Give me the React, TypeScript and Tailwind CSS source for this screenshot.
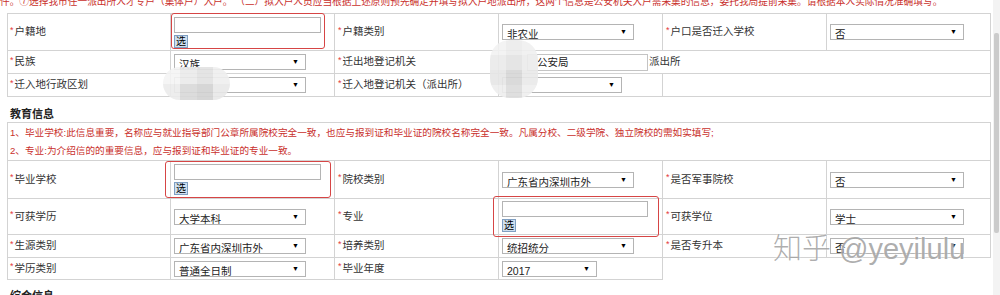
import React from 'react';

const font = "font-[family-name:'Liberation_Sans','Noto_Sans_CJK_SC',sans-serif]";

function Label({ text, first }: { text: string; first?: boolean }) {
  return (
    <div
      className={`${first ? 'border-l pl-[2px]' : 'pl-[3px]'} w-[164px] shrink-0 border-r border-b border-[#d3d3d3] flex items-center text-[10.5px] text-[#333]`}
    >
      <span className="text-[#e4393c] text-[9px] mr-[1px] -mt-[3px]">*</span>
      <span>{text}</span>
    </div>
  );
}

function Cell({ children, w = 'w-[164px]', className = '' }: { children?: React.ReactNode; w?: string; className?: string }) {
  return (
    <div className={`${w} shrink-0 border-r border-b border-[#d3d3d3] flex items-center pl-[3px] relative ${className}`}>
      {children}
    </div>
  );
}

function Select({ value, w }: { value: string; w: string }) {
  return (
    <div className={`${w} h-[16px] border border-[#b4b4b4] bg-white flex justify-between pl-[4px] pr-[6px] overflow-hidden`}>
      <span className="text-[10.5px] leading-[14px] pt-[2px] text-[#222]">{value}</span>
      <span className="text-[7px] leading-[14px] text-black">▼</span>
    </div>
  );
}

function PickField({ inputW }: { inputW: string }) {
  return (
    <div className="flex flex-col gap-[2px]">
      <div className={`${inputW} h-[16px] border border-[#b4b4b4] bg-white`} />
      <div className="w-[14px] h-[13px] border border-[#7f9fc2] bg-[#cfe0f0] text-[10px] leading-[11px] text-center text-black">
        选
      </div>
    </div>
  );
}

function Mosaic({ cols, colors, cell }: { cols: string; colors: string[]; cell: string }) {
  return (
    <div className={`grid ${cols}`}>
      {colors.map((c, i) => (
        <div key={i} className={cell} style={{ backgroundColor: c }} />
      ))}
    </div>
  );
}

export default function App() {
  return (
    <div className={`w-[1000px] h-[295px] overflow-hidden bg-white flex relative ${font}`}>
      <div className="w-[993px] shrink-0">
        {/* red notice, cut at top */}
        <div className="h-[13px] overflow-hidden">
          <div className="-mt-[6px] leading-[16px] text-[9.7px] text-[#c9302c] whitespace-nowrap">
            件。⑦选择我市任一派出所人才专户（集体户）入户。 （二）拟入户人员应当根据上述原则预先确定并填写拟入户地派出所，这两个信息是公安机关入户需采集的信息，委托我局提前采集。请根据本人实际情况准确填写。
          </div>
        </div>

        {/* household table */}
        <div className="ml-[7px] w-[984px] border-t border-[#d3d3d3]">
          <div className="flex h-[37px]">
            <Label text="户籍地" first />
            <Cell className="items-start pt-[3px]">
              <div className="absolute left-0 -top-[1px] w-[154px] h-[36px] border-[1.5px] border-[#d64545] rounded-[3px]" />
              <PickField inputW="w-[147px]" />
            </Cell>
            <Label text="户籍类别" />
            <Cell>
              <Select value="非农业" w="w-[132px]" />
            </Cell>
            <Label text="户口是否迁入学校" />
            <Cell>
              <Select value="否" w="w-[134px]" />
            </Cell>
          </div>
          <div className="flex h-[23px]">
            <Label text="民族" first />
            <Cell>
              <Select value="汉族" w="w-[132px]" />
            </Cell>
            <Label text="迁出地登记机关" />
            <Cell w="w-[492px]" className="pl-[28px]">
              <div className="w-[121px] h-[17px] border border-[#c4c4c4] bg-white pl-[9px] text-[10.5px] leading-[15px] text-[#222]">
                公安局
              </div>
              <span className="ml-[1px] text-[10.5px] text-[#333]">派出所</span>
            </Cell>
          </div>
          <div className="flex h-[23px]">
            <Label text="迁入地行政区划" first />
            <Cell>
              <Select value="" w="w-[132px]" />
            </Cell>
            <Label text="迁入地登记机关（派出所）" />
            <Cell>
              <Select value="" w="w-[120px]" />
            </Cell>
            <Cell w="w-[328px]" />
          </div>
        </div>

        <div className="h-[25px] pt-[9px] pl-[10px] text-[11px] leading-[16px] font-bold text-[#222]">教育信息</div>

        {/* education table */}
        <div className="ml-[7px] w-[984px] border-t border-[#d3d3d3]">
          <div className="h-[38px] border-l border-r border-b border-[#d3d3d3] pl-[2px] flex flex-col justify-center text-[9.65px] leading-[18px] text-[#c9302c]">
            <div>1、毕业学校:此信息重要，名称应与就业指导部门公章所属院校完全一致，也应与报到证和毕业证的院校名称完全一致。凡属分校、二级学院、独立院校的需如实填写;</div>
            <div>2、专业:为介绍信的的重要信息，应与报到证和毕业证的专业一致。</div>
          </div>
          <div className="flex h-[38px]">
            <Label text="毕业学校" first />
            <Cell className="items-start pt-[3px]">
              <div className="absolute -left-[6px] top-0 w-[166px] h-[37px] border-[1.5px] border-[#d64545] rounded-[3px]" />
              <PickField inputW="w-[147px]" />
            </Cell>
            <Label text="院校类别" />
            <Cell>
              <Select value="广东省内深圳市外" w="w-[132px]" />
            </Cell>
            <Label text="是否军事院校" />
            <Cell>
              <Select value="否" w="w-[134px]" />
            </Cell>
          </div>
          <div className="flex h-[36px]">
            <Label text="可获学历" first />
            <Cell>
              <Select value="大学本科" w="w-[132px]" />
            </Cell>
            <Label text="专业" />
            <Cell className="items-start pt-[2px]">
              <div className="absolute -left-[6px] -top-[3px] w-[166px] h-[41px] border-[1.5px] border-[#d64545] rounded-[3px]" />
              <PickField inputW="w-[146px]" />
            </Cell>
            <Label text="可获学位" />
            <Cell>
              <Select value="学士" w="w-[134px]" />
            </Cell>
          </div>
          <div className="flex h-[23px]">
            <Label text="生源类别" first />
            <Cell>
              <Select value="广东省内深圳市外" w="w-[132px]" />
            </Cell>
            <Label text="培养类别" />
            <Cell>
              <Select value="统招统分" w="w-[132px]" />
            </Cell>
            <Label text="是否专升本" />
            <Cell>
              <Select value="否" w="w-[134px]" />
            </Cell>
          </div>
          <div className="flex h-[22px]">
            <Label text="学历类别" first />
            <Cell>
              <Select value="普通全日制" w="w-[132px]" />
            </Cell>
            <Label text="毕业年度" />
            <Cell>
              <Select value="2017" w="w-[95px]" />
            </Cell>
          </div>
        </div>

        <div className="pt-[8px] pl-[10px] text-[11px] leading-[16px] font-bold text-[#222]">综合信息</div>
      </div>

      {/* scrollbar */}
      <div className="w-[7px] shrink-0 bg-[#f3f3f3] pt-[33px]">
        <div className="w-[5px] h-[200px] mx-auto bg-[#cbcbcb] rounded-[2px]" />
      </div>

      {/* privacy mosaics */}
      <div className="absolute left-[163px] top-[67px] w-[67px] h-[33px] rounded-[18px] overflow-hidden opacity-90">
        <Mosaic
          cols="grid-cols-4"
          cell="h-[17px]"
          colors={['#f4f4f4', '#ebebeb', '#e2e2e2', '#efefef', '#ececec', '#d9d9d9', '#d2d2d2', '#e8e8e8']}
        />
      </div>
      <div className="absolute left-[490px] top-[40px] w-[48px] h-[58px] rounded-[20px] overflow-hidden opacity-90">
        <Mosaic
          cols="grid-cols-3"
          cell="h-[15px]"
          colors={['#f2f2f2', '#ececec', '#f0f0f0', '#ebebeb', '#e3e3e3', '#ececec', '#e6e6e6', '#d6d6d6', '#e9e9e9', '#eeeeee', '#dcdcdc', '#efefef']}
        />
      </div>

      {/* watermark */}
      <div className="absolute left-[773px] top-[229px] text-[29px] leading-[40px] text-[#8a8a8a]/70 font-light whitespace-nowrap [text-shadow:0_0_2px_#fff]">
        知乎 @yeyilulu
      </div>
    </div>
  );
}
